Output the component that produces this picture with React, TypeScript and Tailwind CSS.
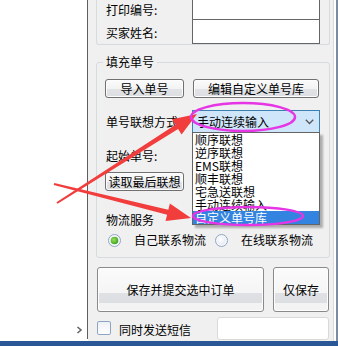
import React from 'react';

// arrow polygon: thin tail growing to a wide head
function arrowPts(x1: number, y1: number, x2: number, y2: number, tailW: number, shaftW: number, headL: number, headW: number) {
  const dx = x2 - x1;
  const dy = y2 - y1;
  const len = Math.hypot(dx, dy);
  const ux = dx / len;
  const uy = dy / len;
  const nx = -uy;
  const ny = ux;
  const bx = x2 - ux * headL;
  const by = y2 - uy * headL;
  const p = [
    [x1 + (nx * tailW) / 2, y1 + (ny * tailW) / 2],
    [bx + (nx * shaftW) / 2, by + (ny * shaftW) / 2],
    [bx + nx * headW, by + ny * headW],
    [x2, y2],
    [bx - nx * headW, by - ny * headW],
    [bx - (nx * shaftW) / 2, by - (ny * shaftW) / 2],
    [x1 - (nx * tailW) / 2, y1 - (ny * tailW) / 2],
  ];
  return p.map((q) => q.join(',')).join(' ');
}

const smallBtn =
  'h-[19px] rounded-[3px] border border-[#707070] bg-[linear-gradient(to_bottom,#fbfbfb_0%,#f3f3f3_50%,#e1e3e6_50%,#dcdee2_100%)] shadow-[inset_0_0_0_1px_#fdfdfd] flex items-center justify-center leading-[16px] whitespace-nowrap overflow-hidden';

const bigBtn =
  'h-[45px] rounded-[3px] border border-[#8a8a8a] bg-[linear-gradient(to_bottom,#fbfbfb_0%,#f5f5f5_58%,#dfe1e4_58%,#dcdfe2_82%,#f3f3f3_82%,#f3f3f3_100%)] shadow-[inset_0_0_0_1px_#fdfdfd] flex items-center justify-center';

const items = ['顺序联想', '逆序联想', 'EMS联想', '顺丰联想', '宅急送联想', '手动连续输入', '自定义单号库'];

function Radio({ checked }: { checked?: boolean }) {
  return (
    <svg width="13" height="13" viewBox="0 0 13 13" className="shrink-0">
      <defs>
        <radialGradient id={checked ? 'rg1' : 'rg0'} cx="0.4" cy="0.4" r="0.7">
          <stop offset="0" stopColor={checked ? '#9be05a' : '#ffffff'} />
          <stop offset="1" stopColor={checked ? '#2f9a1c' : '#e3e9f1'} />
        </radialGradient>
      </defs>
      <circle cx="6.5" cy="6.5" r="6" fill="#f6f7f9" stroke="#8ea6c4" strokeWidth="1" />
      <circle cx="6.5" cy="6.5" r={checked ? 3.8 : 4.2} fill={`url(#${checked ? 'rg1' : 'rg0'})`} />
    </svg>
  );
}

export default function App() {
  return (
    <div className="relative w-[338px] h-[346px] overflow-hidden bg-white text-black text-[12px] leading-[16px] font-['Noto_Sans_CJK_SC','Liberation_Sans',sans-serif]">
      <div className="flex h-[341px]">
        {/* left white column with divider */}
        <div className="w-[88px] shrink-0 flex flex-col">
          <div className="h-[339px] border-r border-[#5e5e5e] flex flex-col">
            <div className="flex-1" />
            <div className="flex justify-end pr-[4px] pb-[5px]">
              <svg width="7" height="8" viewBox="0 0 7 8">
                <polyline points="1.5,1 5,4 1.5,7" fill="none" stroke="#666" strokeWidth="1.6" />
              </svg>
            </div>
          </div>
        </div>

        {/* right panel */}
        <div className="flex-1 flex bg-[#f0f0f0] overflow-hidden">
          <div className="flex-1 pl-[8px]">
            {/* top group (clipped) */}
            <div className="w-[234px] h-[45px] border-x border-b border-[#d6dbe0] rounded-b-[3px]">
              <div className="flex h-[20px]">
                <span className="w-[95px] pl-[9px] self-center">打印编号:</span>
                <div className="w-[128px] h-[20px] border-x border-b border-[#666] bg-white" />
              </div>
              <div className="flex h-[24px]">
                <span className="w-[95px] pl-[9px] mt-[5px]">买家姓名:</span>
                <div className="w-[128px] h-[24px] border-x border-b border-[#666] bg-white" />
              </div>
            </div>

            {/* fill number group */}
            <fieldset className="mt-[9px] w-[234px] border border-[#d6dbe0] rounded-[3px] pb-[9px]">
              <legend className="ml-[6px] px-[3px]">填充单号</legend>
              <div className="flex mt-[9px] pl-[8px] gap-[9px]">
                <div className={`${smallBtn} w-[79px]`}>导入单号</div>
                <div className={`${smallBtn} w-[126px]`}>编辑自定义单号库</div>
              </div>

              <div className="flex items-center mt-[12px] h-[23px]">
                <span className="w-[95px] pl-[9px]">单号联想方式</span>
                <div className="relative w-[128px] h-[23px]">
                  <div className="h-full border border-[#3c7fb1] bg-[#cfe5f9] flex items-center pl-[4px] pr-[5px]">
                    <span className="flex-1">手动连续输入</span>
                    <svg width="9" height="6" viewBox="0 0 9 6">
                      <polyline points="0.8,0.8 4.5,4.5 8.2,0.8" fill="none" stroke="#555" strokeWidth="1.3" />
                    </svg>
                  </div>
                  <div className="absolute left-0 top-[22px] w-[128px] border border-[#646464] bg-white shadow-[3px_3px_2px_rgba(0,0,0,0.28)] z-10">
                    {items.map((t, i) => (
                      <div
                        key={t}
                        className={`h-[13px] leading-[13px] pl-[2px] whitespace-nowrap ${i === items.length - 1 ? 'bg-[#3284e0] text-white' : ''}`}
                      >
                        {t}
                      </div>
                    ))}
                  </div>
                </div>
              </div>

              <div className="mt-[15px] pl-[9px] h-[16px]">起始单号:</div>

              <div className="flex mt-[8px] pl-[8px]">
                <div className={`${smallBtn} w-[79px]`}>读取最后联想</div>
              </div>

              <div className="mt-[21px] pl-[9px] h-[16px]">物流服务</div>

              <div className="flex items-center mt-[4px] h-[16px] pl-[11px]">
                <Radio checked />
                <span className="ml-[13px]">自己联系物流</span>
                <span className="ml-[9px] flex items-center">
                  <Radio />
                </span>
                <span className="ml-[13px]">在线联系物流</span>
              </div>
            </fieldset>

            {/* action buttons */}
            <div className="flex mt-[9px] pl-[1px] gap-[9px]">
              <div className={`${bigBtn} w-[167px]`}>保存并提交选中订单</div>
              <div className={`${bigBtn} w-[56px]`}>仅保存</div>
            </div>

            <div className="flex items-start mt-[5px] w-[233px] pl-[1px]">
              <div className="mt-[4px] w-[14px] h-[14px] rounded-[2px] border border-[#8ea4c3] bg-[linear-gradient(to_bottom,#eef1f5,#ffffff)]" />
              <span className="ml-[8px] mt-[5px]">同时发送短信</span>
              <div className="ml-auto w-[112px] h-[23px] rounded-[3px] border border-[#d9d9d9] bg-white" />
            </div>
          </div>
          <div className="w-px bg-[#dadada]" />
          <div className="w-[2px] bg-white" />
          <div className="w-[2px] bg-[#7d8ba0]" />
        </div>
      </div>
      <div className="h-[5px] bg-[#2b5797]" />

      {/* annotations */}
      <svg className="absolute inset-0 pointer-events-none z-20" width="338" height="346" viewBox="0 0 338 346">
        <polygon points={arrowPts(57, 203, 197, 114, 2, 5, 24, 9)} fill="#f23d3d" />
        <polygon points={arrowPts(54, 184, 191, 218, 2, 5, 24, 9)} fill="#f23d3d" />
        <ellipse cx="243" cy="117" rx="52" ry="14" fill="none" stroke="#e535e5" strokeWidth="2.5" />
        <ellipse cx="248" cy="216" rx="55" ry="9" fill="none" stroke="#e535e5" strokeWidth="2.5" />
      </svg>
    </div>
  );
}
